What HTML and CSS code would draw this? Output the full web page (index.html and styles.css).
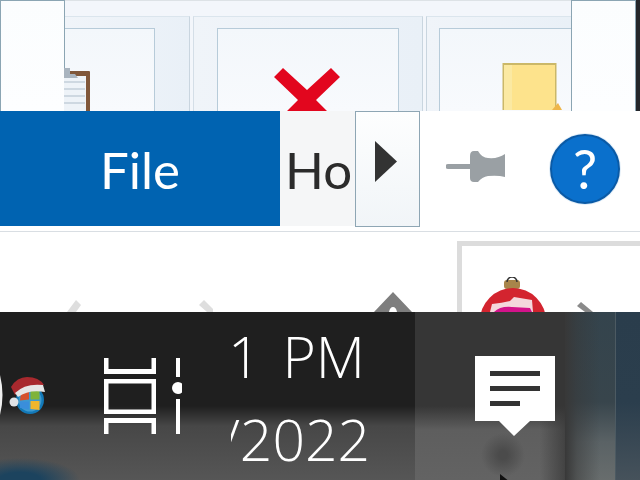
FILE: index.html
```html
<!DOCTYPE html>
<html lang="en">
<head>
<meta charset="utf-8">
<title>Ribbon and taskbar</title>
<link rel="stylesheet" href="styles.css">
</head>
<body>
<div class="page">
  <section class="ribbon">
    <div class="scroll-panel"></div>
    <div class="groups">
      <div class="group group-clip">
        <div class="rb rb-clip">
          <svg class="ic-clip" viewBox="0 0 26 44"><path d="M0 3h25a1 1 0 0 1 1 1v40h-4V8H0z" fill="#80573a"/><rect x="0" y="8" width="22" height="36" fill="#eef3f8"/><path d="M0 14h21M0 21h21M0 28h21M0 35h21" stroke="#c3cfd9" stroke-width="1.5"/><path d="M0 10h14l-3-4H6V-1H0z" fill="#a9b4bf"/></svg>
        </div>
      </div>
      <div class="group group-del">
        <div class="rb rb-del">
          <svg class="ic-del" viewBox="0 0 66 44"><path d="M9 0L33 22 57 0 66 9 42 32 54 44H12L24 32 0 9z" fill="#e2061e"/></svg>
        </div>
      </div>
      <div class="group group-new">
        <div class="rb rb-new">
          <svg class="ic-note" viewBox="0 0 60 47"><rect x="0.5" y="0" width="54" height="47" fill="#cbb868"/><rect x="2" y="2" width="51" height="45" fill="#fde38c"/><rect x="2" y="2" width="8" height="45" fill="#fbe9a2"/><path d="M50 47l6-7 4 7z" fill="#eeb64a"/></svg>
        </div>
      </div>
    </div>
    <div class="scroll-panel"></div>
    <div class="edge"></div>
  </section>

  <nav class="tabbar">
    <div class="tab-file">File</div>
    <div class="tab-home"><span>Ho</span></div>
    <div class="tab-scroll"><svg class="ic-tri" viewBox="0 0 22 41"><path d="M0 0L22 20.500 0 41z" fill="#333"/></svg></div>
    <svg class="ic-pin" viewBox="0 0 60 32"><path d="M2 13H24V5Q24 0 28 0H32Q36 7 42 7 52 8 59 3V26Q52 24 42 25 36 26 32 31H28Q24 31 24 27V18H2a2.500 2.500 0 0 1 0-5z" fill="#9aa0a4"/></svg>
    <div class="help">?</div>
  </nav>

  <section class="gallery-row">
    <svg class="ic-chev ic-chev-l" viewBox="0 0 14 12"><path d="M0 12L9 0l5 5-5 7z" fill="#dedede"/></svg>
    <svg class="ic-chev ic-chev-r" viewBox="0 0 14 12"><path d="M5 0L14 9v3H8L0 5z" fill="#dedede"/></svg>
    <svg class="ic-diamond" viewBox="0 0 38 20"><path d="M19 0L38 20H23q-1-5-4-5t-4 5H0z" fill="#7e7e7e"/></svg>
    <div class="gallery">
      <svg class="ic-ball" viewBox="0 0 66 35"><rect x="24" y="3" width="16" height="9" rx="3" fill="#a8854a"/><path d="M27 5a5 5 0 0 1 10 0" fill="none" stroke="#333" stroke-width="1.500"/><circle cx="33" cy="44" r="33" fill="#d3242f"/><path d="M10 35L12 27Q22 26 30 24L34 20 52 23 53 35z" fill="#f4d7dc"/><path d="M14 35Q20 29 32 30L50 31 52 35z" fill="#d3138a"/></svg>
    </div>
    <svg class="ic-chev ic-chev-g" viewBox="0 0 16 10"><path d="M4 0L16 10H8L0 4z" fill="#8a8a8a"/></svg>
  </section>

  <footer class="taskbar">
    <div class="tb-main">
      <svg class="ic-partial" viewBox="0 0 5 40"><path d="M0 0q5 20 0 40z" fill="#efefef"/></svg>
      <svg class="ic-win" viewBox="0 0 36 38"><circle cx="21" cy="23" r="14" fill="#1379b8"/><circle cx="21" cy="23" r="11.500" fill="#3d9ad0"/><path d="M12 16l8-3v9.500l-9 1z" fill="#d5512d"/><path d="M21.500 12.500l9 1.500v8.500h-9z" fill="#7fb33a"/><path d="M11 24.500h9v8l-9-1.500z" fill="#3a8edb"/><path d="M21.500 24h9v9l-9-1z" fill="#efb62c"/><path d="M2 10Q8 0 18 0q12 0 17 8-14-1-24 6l-5 4z" fill="#a8292e"/><path d="M6 16Q16 6 34 8l2 7Q20 12 9 20z" fill="#e6e6e6"/><circle cx="5" cy="25" r="4.500" fill="#e0e3e6"/></svg>
      <svg class="ic-action" viewBox="0 0 78 76"><g fill="#fff"><rect x="0" y="0" width="4.500" height="16"/><rect x="0" y="11" width="52" height="5"/><rect x="47.500" y="0" width="4.500" height="16"/><path fill-rule="evenodd" d="M0 21H52V56H0zM4.500 25.500V51.500H47.500V25.500z"/><rect x="0" y="60" width="52" height="5"/><rect x="0" y="60" width="4.500" height="16"/><rect x="47.500" y="60" width="4.500" height="16"/><rect x="72" y="0" width="4" height="19"/><rect x="72" y="41" width="4" height="35"/><circle cx="74" cy="30" r="6"/></g></svg>
      <div class="clock"><span class="time">1 PM</span><span>/2022</span></div>
    </div>
    <div class="tb-notify">
      <svg class="ic-notify" viewBox="0 0 80 80"><path d="M0 0H80V65H55L39 80 24 65H0z" fill="#fff"/><path d="M15 15H65V20H15zM15 30H65V35H15zM15 45H45V50H15z" fill="#333"/></svg>
      <svg class="ic-cursor" viewBox="0 0 10 8"><path d="M0 0L10 8H0z" fill="#111"/></svg>
    </div>
    <div class="tb-a"></div>
    <div class="tb-b"></div>
  </footer>
</div>
</body>
</html>
```

FILE: styles.css
```css
* { box-sizing: border-box; }
html, body { margin: 0; padding: 0; background: #fff; }
svg { display: block; flex: none; }

.page {
  width: 640px;
  height: 480px;
  overflow: hidden;
  display: flex;
  flex-direction: column;
  font-family: Lato, "Open Sans", sans-serif;
}

/* Ribbon strip */
.ribbon { height: 111px; display: flex; flex: none; background: #fff; }
.scroll-panel {
  width: 65px;
  flex: none;
  background: linear-gradient(#fbfdfe, #fdfeff);
  border: 1px solid #8ba5b3;
  border-bottom: 0;
}
.edge { width: 4px; flex: none; background: #24262a; }
.groups {
  flex: 1;
  min-width: 0;
  display: flex;
  padding-top: 15px;
  background: #f3f6fb;
  border-top: 1px solid #dde2e6;
}
.group {
  flex: none;
  display: flex;
  align-items: flex-end;
  border-top: 1px solid #dbe5ed;
  background: linear-gradient(90deg, #f0f4f9, #e9f0f7);
}
.group-clip { width: 125px; padding-right: 34px; border-right: 1px solid #c9d5df; }
.group-del { width: 230px; margin-left: 3px; padding: 0 23px; border-right: 1px solid #c9d5df; border-left: 1px solid #d4dee7; }
.group-new { width: 145px; margin-left: 3px; padding-left: 12px; border-left: 1px solid #c9d5df; }
.rb {
  flex: 1;
  height: 83px;
  display: flex;
  background: linear-gradient(#f3f7fb, #f8fafd);
  border: 1px solid #b7cbd9;
  border-bottom: 0;
}
.rb-clip { border-left: 0; padding-top: 39px; }
.rb-del { justify-content: center; padding-top: 39px; }
.rb-new { border-right: 0; padding: 34px 0 0 62px; }
.ic-clip { width: 26px; height: 44px; margin-left: -1px; }
.ic-del { width: 66px; height: 44px; margin-left: -2px; }
.ic-note { width: 60px; height: 47px; }

/* Tabs */
.tabbar {
  height: 121px;
  flex: none;
  display: flex;
  align-items: flex-start;
  background: #fff;
  border-bottom: 1px solid #d9dee3;
}
.tab-file {
  width: 280px;
  height: 115px;
  display: flex;
  align-items: center;
  justify-content: center;
  padding-top: 2px;
  background: #0063b1;
  color: #fff;
  font-size: 51px;
  line-height: 1;
}
.tab-home {
  width: 75px;
  height: 115px;
  overflow: hidden;
  display: flex;
  align-items: center;
  padding: 2px 0 0 5px;
  background: #f5f6f7;
  color: #2b2b2b;
  font-size: 51px;
  line-height: 1;
  white-space: nowrap;
}
.tab-scroll {
  width: 65px;
  height: 116px;
  padding: 29px 0 0 19px;
  background: linear-gradient(#fdfefe, #f1f5f8);
  border: 1px solid #8ea6b4;
}
.ic-tri { width: 22px; height: 41px; }
.ic-pin { width: 60px; height: 32px; margin: 40px 0 0 26px; }
.help {
  width: 70px;
  height: 70px;
  margin: 23px 0 0 44px;
  border-radius: 50%;
  display: flex;
  align-items: center;
  justify-content: center;
  background: #0a70cc;
  border: 2px solid #0a5aa6;
  box-shadow: 0 0 0 1px #e2eef8;
  color: #fff;
  font-size: 54px;
  line-height: 1;
}

.gallery-row {
  height: 80px;
  flex: none;
  display: flex;
  align-items: flex-end;
  overflow: hidden;
  background: #fff;
}
.ic-chev-l { width: 14px; height: 12px; margin-left: 67px; }
.ic-chev-r { width: 14px; height: 12px; margin-left: 118px; }
.ic-diamond { width: 38px; height: 20px; margin-left: 161px; }
.gallery {
  width: 183px;
  height: 71px;
  flex: none;
  margin: 0 -63px 0 45px;
  padding: 31px 0 0 18px;
  border: 5px solid #dcdcdc;
  border-bottom: 0;
  border-right: 0;
}
.ic-ball { width: 66px; height: 35px; }
.ic-chev-g { width: 16px; height: 10px; }

/* Taskbar */
.taskbar { flex: 1; display: flex; color: #fff; }
.tb-main {
  width: 415px;
  flex: none;
  display: flex;
  align-items: flex-start;
  background:
    radial-gradient(ellipse 60px 22px at 20px 168px, #1c435e 35%, rgba(28, 67, 94, 0) 100%),
    linear-gradient(#1f1f1f 0, #1f1f1f 94px, #474747 114px, #565656 168px);
}
.ic-partial { width: 5px; height: 40px; margin-top: 63px; }
.ic-win { width: 36px; height: 38px; margin: 65px 0 0 4px; }
.ic-action { width: 78px; height: 76px; margin: 46px 0 0 59px; }
.clock {
  width: 139px;
  height: 168px;
  margin-left: 49px;
  overflow: hidden;
  display: flex;
  flex-direction: column;
  align-items: flex-end;
  font-family: "Open Sans", "Noto Sans", sans-serif;
  font-size: 57px;
  font-weight: 350;
  line-height: 83px;
  white-space: nowrap;
  padding-top: 3px;
}
.clock span { flex: none; }
.clock .time { margin-right: 5px; word-spacing: 7px; }
.tb-notify {
  width: 150px;
  flex: none;
  position: relative;
  padding: 44px 0 0 60px;
  background:
    radial-gradient(circle 22px at 88px 143px, #4b4b4b 20%, rgba(75, 75, 75, 0) 100%),
    linear-gradient(90deg, rgba(54, 54, 54, 0) 125px, rgba(54, 54, 54, 0.7) 150px),
    linear-gradient(#363636 0, #363636 94px, #5e5e5e 118px, #636363 168px);
}
.ic-notify { width: 80px; height: 80px; }
.ic-cursor { position: absolute; left: 85px; top: 162px; width: 10px; height: 8px; }
.tb-a {
  width: 50px;
  flex: none;
  background:
    linear-gradient(90deg, #383838 0, rgba(56, 56, 56, 0.5) 12px, rgba(56, 56, 56, 0) 35px),
    linear-gradient(#34444d 0, #38454c 90px, #5a6265 130px, #686d6d 168px);
}
.tb-b {
  flex: 1;
  background: linear-gradient(#2a3d4c 0, #2b3e4d 90px, #46525b 168px);
  border-left: 1px solid #4c5a62;
}
```
